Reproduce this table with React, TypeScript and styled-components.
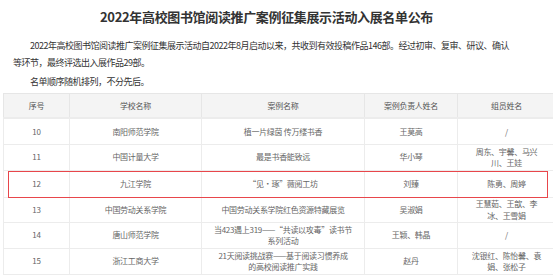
import React from "react";
import styled, { createGlobalStyle } from "styled-components";

const GlobalStyle = createGlobalStyle`
  html, body { margin: 0; padding: 0; background: #fff; }
  body { font-family: "Noto Sans CJK SC", "Noto Sans", sans-serif; }
`;

const Page = styled.div`
  width: 553px;
  padding: 7px 0 0;
  box-sizing: border-box;
`;

const Title = styled.h1`
  margin: 0;
  padding-right: 20px;
  font-size: 13px;
  letter-spacing: -0.35px;
  line-height: 20px;
  font-weight: 700;
  color: #333;
  text-align: center;
`;

const Article = styled.div`
  padding: 11px 0 0 13px;
  width: 500px;
`;

const Para = styled.p`
  margin: 0 0 2.5px;
  font-size: 9px;
  letter-spacing: -0.5px;
  line-height: 16.7px;
  color: #333;
  text-indent: 17px;
`;

const TableWrap = styled.div`
  position: relative;
  margin: 1.5px 3px 0;
`;

const Table = styled.table`
  width: 547px;
  border-collapse: collapse;
  table-layout: fixed;
  font-size: 8px;
  letter-spacing: -0.3px;
  color: #666;
`;

const HeadCell = styled.th<{ $w: number }>`
  width: ${(p) => p.$w}px;
  height: 23px;
  padding: 0;
  background: #f4f4f4;
  border: 1px solid #e6e6e6;
  border-bottom: 2px solid #ececec;
  font-weight: 400;
  color: #555;
  text-align: center;
  vertical-align: middle;
`;

const Row = styled.tr<{ $h: number }>`
  height: ${(p) => p.$h}px;
`;

const Cell = styled.td`
  padding: 0;
  border: 1px solid #ececec;
  text-align: center;
  vertical-align: middle;
  line-height: 11.5px;
  white-space: nowrap;
`;

const Highlight = styled.div<{ $top: number; $h: number }>`
  position: absolute;
  left: 5px;
  right: 2px;
  top: ${(p) => p.$top}px;
  height: ${(p) => p.$h}px;
  border: 1.5px solid #e8464b;
  box-sizing: border-box;
  pointer-events: none;
`;

const cols = [
  { label: "序号", w: 65 },
  { label: "学校名称", w: 131 },
  { label: "案例名称", w: 162 },
  { label: "案例负责人姓名", w: 92 },
  { label: "组员姓名", w: 97 },
];

type RowData = { no: string; school: string; title: string[]; lead: string; members: string[]; h: number };

const rows: RowData[] = [
  { no: "10", school: "南阳师范学院", title: ["植一片绿茵 传万缕书香"], lead: "王莫高", members: ["/"], h: 26 },
  { no: "11", school: "中国计量大学", title: ["最是书香能致远"], lead: "华小琴", members: ["周东、宇馨、马兴", "川、王娃"], h: 26 },
  { no: "12", school: "九江学院", title: ["“见·琢”薇阅工坊"], lead: "刘臻", members: ["陈勇、周婷"], h: 27 },
  { no: "13", school: "中国劳动关系学院", title: ["中国劳动关系学院红色资源特藏展览"], lead: "吴淑娟", members: ["王慧茹、王歆、李", "冰、王雪娟"], h: 25 },
  { no: "14", school: "唐山师范学院", title: ["当423遇上319——“共读以攻毒”读书节", "系列活动"], lead: "王颖、韩晶", members: ["/"], h: 26 },
  { no: "15", school: "浙江工商大学", title: ["21天阅读挑战赛——基于阅读习惯养成", "的高校阅读推广实践"], lead: "赵丹", members: ["沈银红、陈怡馨、袁", "娟、张松子"], h: 26 },
];

const Lines = ({ lines }: { lines: string[] }) => (
  <>
    {lines.map((l, i) => (
      <React.Fragment key={i}>
        {i > 0 && <br />}
        {l}
      </React.Fragment>
    ))}
  </>
);

export default function App() {
  return (
    <Page>
      <GlobalStyle />
      <Title>2022年高校图书馆阅读推广案例征集展示活动入展名单公布</Title>
      <Article>
        <Para>
          2022年高校图书馆阅读推广案例征集展示活动自2022年8月启动以来，共收到有效投稿作品146部。经过初审、复审、研议、确认等环节，最终评选出入展作品29部。
        </Para>
        <Para>名单顺序随机排列，不分先后。</Para>
      </Article>
      <TableWrap>
        <Table>
          <thead>
            <tr>
              {cols.map((c) => (
                <HeadCell key={c.label} $w={c.w}>
                  {c.label}
                </HeadCell>
              ))}
            </tr>
          </thead>
          <tbody>
            {rows.map((r) => (
              <Row key={r.no} $h={r.h}>
                <Cell>{r.no}</Cell>
                <Cell>{r.school}</Cell>
                <Cell>
                  <Lines lines={r.title} />
                </Cell>
                <Cell>{r.lead}</Cell>
                <Cell>
                  <Lines lines={r.members} />
                </Cell>
              </Row>
            ))}
          </tbody>
        </Table>
        <Highlight $top={78} $h={27} />
      </TableWrap>
    </Page>
  );
}
